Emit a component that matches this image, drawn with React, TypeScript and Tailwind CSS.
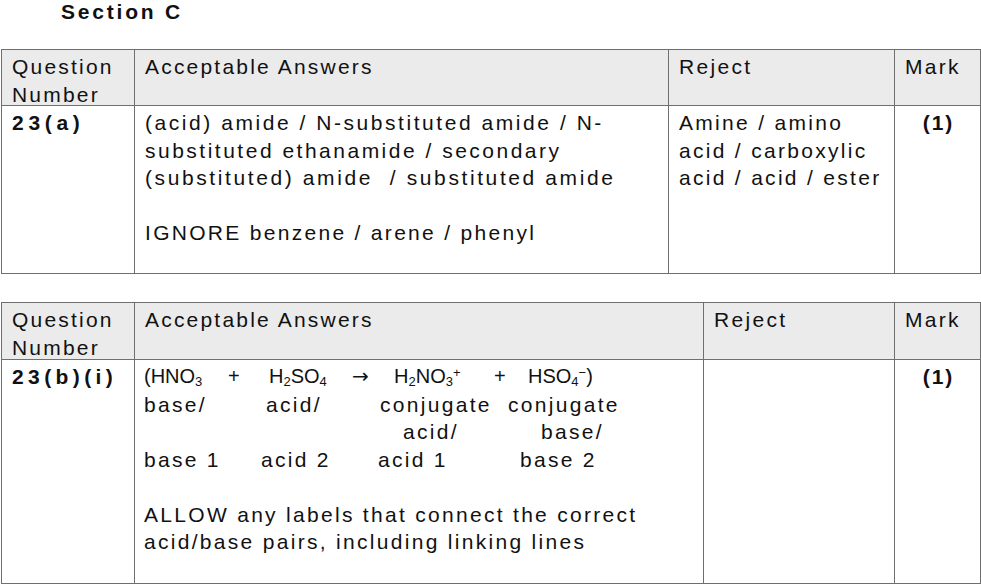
const line = "border-[#6f6f6f]";
const box = "border-r border-b border-[#6f6f6f] pt-[3px] overflow-visible";
const cell = `${box} pl-[10px]`;
const small = "text-[13px]";

function Lines({ items }: { items: string[] }) {
  return (
    <>
      {items.map((t, i) => (
        <div key={i} className="whitespace-pre h-[27.5px]">
          {t === "" ? "\u00a0" : t}
        </div>
      ))}
    </>
  );
}

function HeaderRow() {
  return (
    <>
      <div className={`${cell} bg-[#ebebeb] tracking-[2.2px]`}>
        <div>Question</div>
        <div>Number</div>
      </div>
      <div className={`${cell} bg-[#ebebeb] tracking-[2.2px]`}>Acceptable Answers</div>
      <div className={`${cell} bg-[#ebebeb]`}>Reject</div>
      <div className={`${cell} bg-[#ebebeb]`}>Mark</div>
    </>
  );
}

export default function App() {
  return (
    <div
      className="w-[981px] h-[584px] bg-white text-[#111] text-[21px] leading-[27.5px] tracking-[2.3px] overflow-hidden"
      style={{ fontFamily: '"Liberation Sans", Arial, sans-serif' }}
    >
      <div className="h-[49px] pl-[61px] font-bold leading-[23px] tracking-[2.8px]">Section C</div>

      {/* 23(a) */}
      <div className={`ml-px grid grid-cols-[133px_534px_226px_86px] grid-rows-[56px_168px] border-l border-t ${line}`}>
        <HeaderRow />
        <div className={`${cell} font-bold tracking-[4.7px]`}>23(a)</div>
        <div className={cell}>
          <div className="whitespace-pre h-[27.5px] tracking-[2.55px]">(acid) amide / N-substituted amide / N-</div>
          <div className="whitespace-pre h-[27.5px] tracking-[2.5px]">substituted ethanamide / secondary</div>
          <div className="whitespace-pre h-[27.5px] tracking-[2.6px]">(substituted) amide  / substituted amide</div>
          <Lines items={["", "IGNORE benzene / arene / phenyl"]} />
        </div>
        <div className={cell}>
          <Lines items={["Amine / amino", "acid / carboxylic", "acid / acid / ester"]} />
        </div>
        <div className={`${box} pl-[2px] text-center font-bold tracking-[2px]`}>(1)</div>
      </div>

      {/* 23(b)(i) */}
      <div className={`mt-[28px] ml-px grid grid-cols-[133px_569px_191px_86px] grid-rows-[57px_224px] border-l border-t ${line}`}>
        <HeaderRow />
        <div className={`${cell} font-bold tracking-[4.4px]`}>23(b)(i)</div>
        <div className={`${box} pl-[9px]`}>
          {/* equation line: tighter, no tracking */}
          <div className="flex h-[27.5px] text-[20px] tracking-normal whitespace-nowrap">
            <span className="w-[84px]">
              (HNO<sub className={small}>3</sub>
            </span>
            <span className="w-[41px]">+</span>
            <span className="w-[83px]">
              H<sub className={small}>2</sub>SO<sub className={small}>4</sub>
            </span>
            <span className="w-[42px]" style={{ fontFamily: '"DejaVu Sans", sans-serif' }}>
              →
            </span>
            <span className="w-[100px]">
              H<sub className={small}>2</sub>NO<sub className={small}>3</sub>
              <sup className={small}>+</sup>
            </span>
            <span className="w-[34px]">+</span>
            <span>
              HSO<sub className={small}>4</sub>
              <sup className={small}>−</sup>)
            </span>
          </div>
          <div className="flex h-[27.5px] whitespace-nowrap">
            <span className="w-[122px]">base/</span>
            <span className="w-[114px]">acid/</span>
            <span className="w-[128px]">conjugate</span>
            <span>conjugate</span>
          </div>
          <div className="flex h-[27.5px] whitespace-nowrap pl-[259px]">
            <span className="w-[138px]">acid/</span>
            <span>base/</span>
          </div>
          <div className="flex h-[27.5px] whitespace-nowrap">
            <span className="w-[117px]">base 1</span>
            <span className="w-[117px]">acid 2</span>
            <span className="w-[142px]">acid 1</span>
            <span>base 2</span>
          </div>
          <Lines
            items={[
              "",
              "ALLOW any labels that connect the correct",
              "acid/base pairs, including linking lines",
            ]}
          />
        </div>
        <div className={cell}></div>
        <div className={`${box} pl-[2px] text-center font-bold tracking-[2px]`}>(1)</div>
      </div>
    </div>
  );
}
